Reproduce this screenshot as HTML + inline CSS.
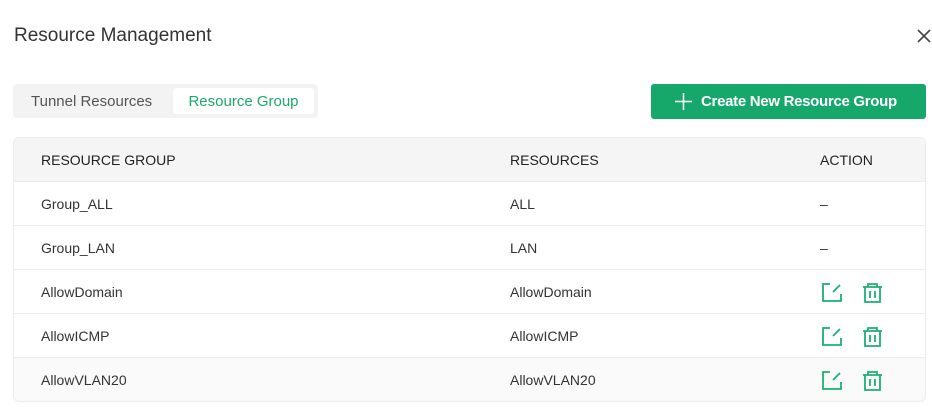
<!DOCTYPE html>
<html><head><style>
body{margin:0;width:932px;height:409px;background:#fff;font-family:"Liberation Sans",sans-serif;position:relative;overflow:hidden;color:#333}
.a{position:absolute}
.title{left:14px;top:25px;font-size:19px;color:#333}
.tabs{left:13px;top:84px;width:305px;height:34px;background:#f3f3f3;border-radius:4px}
.tab1{left:31px;top:93px;font-size:15px;color:#555}
.tab2{left:173px;top:88px;width:141px;height:26px;background:#fff;border-radius:3px;color:#1aaa6b;font-size:15px;line-height:27px;text-align:center}
.btn{left:651px;top:84px;width:275px;height:35px;background:#15a86a;border-radius:3px;color:#fff;font-size:15px;line-height:36px}
.tbl{left:13px;top:137px;width:911px;height:263px;border:1px solid #ececec;border-radius:6px;overflow:hidden}
.row{position:absolute;left:0;width:911px;height:43px;border-bottom:1px solid #ececec;font-size:14px;line-height:44px;color:#333}
.row span{position:absolute}
.h{background:#f5f5f5;font-size:14px;color:#222}
</style></head><body>
<div class="a title">Resource Management</div>
<svg class="a" style="left:916px;top:28px" width="16" height="16"><path d="M2 2L14 14M14 2L2 14" stroke="#444" stroke-width="1.6"/></svg>
<div class="a tabs"></div>
<div class="a tab1">Tunnel Resources</div>
<div class="a tab2">Resource Group</div>
<div class="a btn"><svg style="position:absolute;left:24px;top:9px" width="17" height="17"><path d="M8.5 0V17M0 8.5H17" stroke="#fff" stroke-width="1.5"/></svg><span style="position:absolute;left:50px;font-weight:bold;letter-spacing:-0.3px">Create New Resource Group</span></div>
<div class="a tbl">
<div class="row h" style="top:0"><span style="left:27px">RESOURCE GROUP</span><span style="left:496px">RESOURCES</span><span style="left:806px">ACTION</span></div>
<div class="row" style="top:44px"><span style="left:27px">Group_ALL</span><span style="left:496px">ALL</span><span style="left:806px">–</span></div>
<div class="row" style="top:88px"><span style="left:27px">Group_LAN</span><span style="left:496px">LAN</span><span style="left:806px">–</span></div>
<div class="row" style="top:132px"><span style="left:27px">AllowDomain</span><span style="left:496px">AllowDomain</span></div>
<div class="row" style="top:176px"><span style="left:27px">AllowICMP</span><span style="left:496px">AllowICMP</span></div>
<div class="row" style="top:220px;background:#fafafa;border-bottom:none"><span style="left:27px">AllowVLAN20</span><span style="left:496px">AllowVLAN20</span></div>
</div>
<svg class="a" style="left:0;top:0" width="932" height="409">
<g fill="none" stroke="#1dae74" stroke-width="1.8">
<g id="ic" transform="translate(0,282)">
<path d="M830 2H823V19H841V12"/><path d="M833 10L840 3"/>
<path d="M863 5H882M868 5V2H877V5M865 5V20H880V5M870 9V16M875 9V16"/>
</g>
<use href="#ic" y="44"/><use href="#ic" y="88"/>
</g></svg>
</body></html>
